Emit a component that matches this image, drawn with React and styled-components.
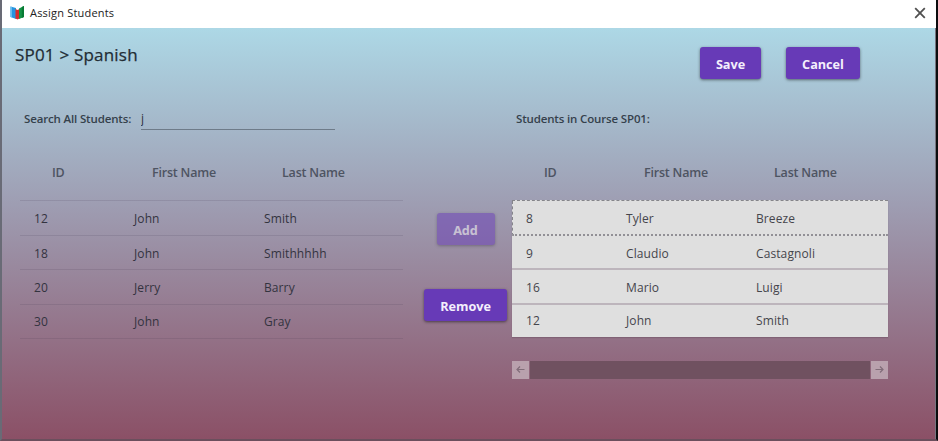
import React from "react";
import styled, { createGlobalStyle, css } from "styled-components";

const GlobalStyle = createGlobalStyle`
  * { box-sizing: border-box; }
  body { margin: 0; background: #0c0c0e; }
  button, input { font-family: inherit; }
`;

const Frame = styled.div`
  width: 938px;
  height: 441px;
  display: flex;
  flex-direction: column;
  overflow: hidden;
  border-left: 2px solid #696b76;
  border-right: 2px solid #0c0c0e;
  border-bottom: 2px solid #6b4f5d;
  font-family: "Open Sans", "Noto Sans", sans-serif;
  font-size: 12px;
  color: #33333f;
`;

const TitleBar = styled.header`
  flex: 0 0 28px;
  display: flex;
  align-items: center;
  padding: 0 10px 3px 8px;
  background: #fff;
`;

const WindowTitle = styled.span`
  flex: 1;
  margin-left: 5px;
  font-size: 11px;
  line-height: 16px;
  letter-spacing: 0.2px;
  color: #222;
`;

const Body = styled.main`
  flex: 1;
  display: flex;
  flex-direction: column;
  border-right: 1px solid #77757f;
  background: linear-gradient(#add8e6, #9e9db2 43%, #8b5066);
`;

const TopRow = styled.div`
  display: flex;
  height: 80px;
  padding: 19px 75px 0 13px;
  align-items: flex-start;
`;

const Heading = styled.h1`
  flex: 1;
  margin: -4px 0 0;
  font-size: 17px;
  font-weight: 500;
  line-height: 24px;
  letter-spacing: 0.2px;
  color: #222c34;
  -webkit-text-stroke: 0.25px #222c34;
`;

const Actions = styled.div`
  display: flex;
  gap: 25px;
`;

const Button = styled.button`
  width: ${(p) => p.$width}px;
  height: 32px;
  padding: 1px 0 0;
  border: 0;
  border-radius: 3px;
  background: #673ab7;
  color: #f4effc;
  font-size: 12.7px;
  font-weight: 700;
  letter-spacing: -0.03px;
  box-shadow: 0 1px 3px rgba(0, 0, 0, 0.5);
  ${(p) =>
    p.disabled &&
    css`
      opacity: 0.5;
    `}
`;

const Columns = styled.div`
  display: grid;
  grid-template-columns: 383px 109px 376px;
  padding-left: 18px;
`;

const Label = styled.div`
  display: flex;
  height: 22px;
  padding-left: 4px;
  line-height: 22px;
  font-size: 11.5px;
  font-weight: 600;
  letter-spacing: -0.15px;
  color: #35414c;
  white-space: nowrap;
`;

const SearchInput = styled.input`
  width: 194px;
  height: 22px;
  margin-left: auto;
  margin-right: 68px;
  padding: 0;
  border: 0;
  border-bottom: 1px solid #6e7b89;
  outline: 0;
  background: transparent;
  font-size: 12px;
  color: #30343e;
`;

const gridRow = css`
  display: grid;
  grid-template-columns: 100px 130px 1fr;
  align-items: center;
`;

const HeadRow = styled.div`
  ${gridRow}
  height: 70px;
  padding: 14px 0 0 32px;
  font-weight: 600;
  font-size: 12.5px;
  letter-spacing: -0.2px;
  color: #4e5462;
`;

const Rows = styled.div`
  border-top: 1px solid ${(p) => (p.$enrolled ? "#85858a" : "rgba(65, 55, 80, 0.15)")};
  ${(p) =>
    p.$enrolled &&
    css`
      border-top-style: dashed;
      background: #dfdfdf;
      box-shadow: 0 1px 1px rgba(70, 50, 65, 0.25);
    `}
`;

const Row = styled.div`
  ${gridRow}
  height: 34.3px;
  padding: 1px 0 0 14px;
  border-bottom: 1px solid rgba(65, 55, 80, 0.15);
  letter-spacing: 0.1px;
  &:first-child {
    height: 35px;
  }
  ${(p) =>
    p.$enrolled &&
    css`
      padding-top: 2px;
      color: #45454c;
      border-bottom: 2px solid #bdb5bc;
      &:last-child {
        height: 32px;
        padding-top: 0;
        border-bottom: 0;
      }
    `}
  ${(p) =>
    p.$focused &&
    css`
      padding: 1px 0 0 13px;
      border-left: 1px dashed #85858a;
      border-bottom: 2px dotted #929096;
    `}
`;

const Transfer = styled.div`
  display: flex;
  flex-direction: column;
  align-items: center;
  gap: 44px;
  padding: 105px 0 0 16px;
`;

const ScrollBar = styled.div`
  display: flex;
  align-items: stretch;
  gap: 1px;
  height: 18px;
  margin-top: 24px;
`;

const ScrollArrow = styled.span`
  width: 17px;
  display: grid;
  place-items: center;
  background: #b9a1ad;
`;

const ScrollTrack = styled.span`
  flex: 1;
  background: #705160;
`;

const Arrow = ({ flip }) => (
  <svg width="9" height="9" viewBox="0 0 9 9" fill="none" stroke="#816d79" strokeWidth="1.2">
    <path d={flip ? "M0.5 4.5H8M5 1.5l3 3-3 3" : "M8.5 4.5H1M4 1.5l-3 3 3 3"} />
  </svg>
);

const BookIcon = () => (
  <svg width="15" height="15" viewBox="0 0 15 15">
    <path d="M0.5 1.5 6 3v11L0.5 12z" fill="#2694e0" />
    <path d="M0.5 1.5 2 2v10.3L0.5 12z" fill="#65bdf0" />
    <path d="M5.5 4 7.5 5 9.5 4v9.5l-2 1-2-1z" fill="#d62c2d" />
    <path d="m9 3.5 5-2.5v11L9 14z" fill="#159447" />
    <path d="m11.8 2.1 2.2-1.1v11l-2.2.9z" fill="#087a34" />
  </svg>
);

const CloseIcon = () => (
  <svg width="12" height="12" viewBox="0 0 12 12" stroke="#505050" strokeWidth="1.8">
    <path d="M1.2 1.2l9.6 9.6M10.8 1.2L1.2 10.8" />
  </svg>
);

const StudentTable = ({ students, enrolled }) => (
  <div>
    <HeadRow>
      <span>ID</span>
      <span>First Name</span>
      <span>Last Name</span>
    </HeadRow>
    <Rows $enrolled={enrolled}>
      {students.map(([id, first, last], i) => (
        <Row key={id} $enrolled={enrolled} $focused={enrolled && i === 0}>
          <span>{id}</span>
          <span>{first}</span>
          <span>{last}</span>
        </Row>
      ))}
    </Rows>
  </div>
);

const found = [
  [12, "John", "Smith"],
  [18, "John", "Smithhhhh"],
  [20, "Jerry", "Barry"],
  [30, "John", "Gray"],
];

const course = [
  [8, "Tyler", "Breeze"],
  [9, "Claudio", "Castagnoli"],
  [16, "Mario", "Luigi"],
  [12, "John", "Smith"],
];

export default function App() {
  return (
    <Frame>
      <GlobalStyle />
      <TitleBar>
        <BookIcon />
        <WindowTitle>Assign Students</WindowTitle>
        <CloseIcon />
      </TitleBar>
      <Body>
        <TopRow>
          <Heading>SP01 &gt; Spanish</Heading>
          <Actions>
            <Button $width={61}>Save</Button>
            <Button $width={74}>Cancel</Button>
          </Actions>
        </TopRow>
        <Columns>
          <section>
            <Label as="label">
              Search All Students:
              <SearchInput defaultValue="j" />
            </Label>
            <StudentTable students={found} />
          </section>
          <Transfer>
            <Button $width={58} disabled>Add</Button>
            <Button $width={83}>Remove</Button>
          </Transfer>
          <section>
            <Label>Students in Course SP01:</Label>
            <StudentTable students={course} enrolled />
            <ScrollBar>
              <ScrollArrow><Arrow /></ScrollArrow>
              <ScrollTrack />
              <ScrollArrow><Arrow flip /></ScrollArrow>
            </ScrollBar>
          </section>
        </Columns>
      </Body>
    </Frame>
  );
}
